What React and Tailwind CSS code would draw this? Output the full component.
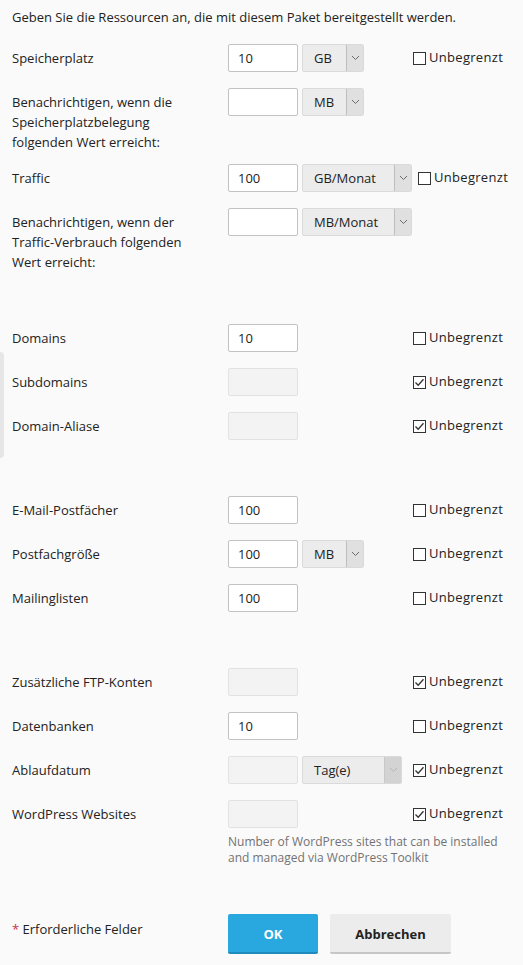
import React from "react";

function Chevron({ light }) {
  return (
    <svg width="9" height="6" viewBox="0 0 9 6" fill="none">
      <polyline
        points="1,1 4.5,4.5 8,1"
        stroke={light ? "#b5b5b5" : "#6b6b6b"}
        strokeWidth="1"
      />
    </svg>
  );
}

function TextInput({ value, disabled }) {
  return (
    <div
      className={
        disabled
          ? "h-[28px] w-[70px] shrink-0 rounded-[2px] border border-[#e2e2e2] bg-[#f3f3f3]"
          : "h-[28px] w-[70px] shrink-0 rounded-[2px] border border-[#c2c2c2] bg-white pl-[9px] text-[13px] leading-[26px] text-[#222]"
      }
    >
      {value}
    </div>
  );
}

function Select({ value, size, disabled }) {
  const w =
    size === "wide" ? "w-[110px]" : size === "mid" ? "w-[100px]" : "w-[62px]";
  return (
    <div
      className={
        "ml-[4px] flex h-[28px] shrink-0 rounded-[2px] border border-[#dadada] bg-[#ececec] " +
        w
      }
    >
      <span className="flex-1 pl-[11px] text-[13px] leading-[26px] text-[#222]">
        {value}
      </span>
      <span
        className={
          disabled
            ? "flex w-[17px] items-center justify-center border-l border-[#c8c8c8] bg-[#d3d3d3]"
            : "flex w-[17px] items-center justify-center border-l border-[#bdbdbd] bg-[#e0e0e0]"
        }
      >
        <Chevron light={disabled} />
      </span>
    </div>
  );
}

function Check({ checked }) {
  return (
    <div className="ml-[6px] flex h-[28px] items-center text-[13px] text-[#222]">
      <span className="flex h-[13px] w-[13px] items-center justify-center border border-[#333] bg-white">
        {checked && (
          <svg width="11" height="11" viewBox="0 0 11 11" fill="none">
            <polyline
              points="1.5,5.5 4.2,8.3 9.5,2.2"
              stroke="#333"
              strokeWidth="1.3"
            />
          </svg>
        )}
      </span>
      <span className="ml-[3px] tracking-[0.3px]">Unbegrenzt</span>
    </div>
  );
}

function Row({ label, multi, children, check }) {
  return (
    <div className={"flex items-start " + (multi ? "mb-[12px]" : "mb-[16px]")}>
      <div className="w-[216px] shrink-0 pt-[4px] pr-[24px] text-[13px] leading-[20px] text-[#222]">
        {label}
      </div>
      <div className="flex min-w-[179px]">{children}</div>
      {check !== undefined && <Check checked={check} />}
    </div>
  );
}

export default function App() {
  return (
    <div className="relative min-h-[965px] bg-[#fafafa] px-[12px] pt-[7px] font-['Open_Sans',sans-serif]">
      <div className="absolute left-0 top-[352px] h-[106px] w-[4px] rounded-r-[4px] bg-[#e6e6e6]" />

      <p className="mb-[17px] text-[13px] leading-[20px] text-[#222]">
        Geben Sie die Ressourcen an, die mit diesem Paket bereitgestellt werden.
      </p>

      <Row label="Speicherplatz" check={false}>
        <TextInput value="10" />
        <Select value="GB" />
      </Row>
      <Row
        multi
        label="Benachrichtigen, wenn die Speicherplatzbelegung folgenden Wert erreicht:"
      >
        <TextInput value="" />
        <Select value="MB" />
      </Row>
      <Row label="Traffic" check={false}>
        <TextInput value="100" />
        <Select value="GB/Monat" size="wide" />
      </Row>
      <Row
        multi
        label="Benachrichtigen, wenn der Traffic-Verbrauch folgenden Wert erreicht:"
      >
        <TextInput value="" />
        <Select value="MB/Monat" size="wide" />
      </Row>

      <div className="h-[40px]" />

      <Row label="Domains" check={false}>
        <TextInput value="10" />
      </Row>
      <Row label="Subdomains" check={true}>
        <TextInput disabled />
      </Row>
      <Row label="Domain-Aliase" check={true}>
        <TextInput disabled />
      </Row>

      <div className="h-[40px]" />

      <Row label="E-Mail-Postfächer" check={false}>
        <TextInput value="100" />
      </Row>
      <Row label="Postfachgröße" check={false}>
        <TextInput value="100" />
        <Select value="MB" />
      </Row>
      <Row label="Mailinglisten" check={false}>
        <TextInput value="100" />
      </Row>

      <div className="h-[40px]" />

      <Row label="Zusätzliche FTP-Konten" check={true}>
        <TextInput disabled />
      </Row>
      <Row label="Datenbanken" check={false}>
        <TextInput value="10" />
      </Row>
      <Row label="Ablaufdatum" check={true}>
        <TextInput disabled />
        <Select value="Tag(e)" size="mid" disabled />
      </Row>
      <div className="flex items-start">
        <div className="w-[216px] shrink-0 pt-[4px] pr-[24px] text-[13px] leading-[20px] text-[#222]">
          WordPress Websites
        </div>
        <div>
          <div className="flex">
            <div className="flex min-w-[179px]">
              <TextInput disabled />
            </div>
            <Check checked={true} />
          </div>
          <p className="mt-[6px] w-[282px] text-[12px] leading-[16px] text-[#737373]">
            Number of WordPress sites that can be installed and managed via
            WordPress Toolkit
          </p>
        </div>
      </div>

      <div className="mt-[48px] flex items-start">
        <div className="w-[216px] shrink-0 pt-[5px] text-[13px] leading-[20px] text-[#222]">
          <span className="text-[#d02d4c]">*</span> Erforderliche Felder
        </div>
        <button className="h-[40px] w-[90px] rounded-[2px] border-b-2 border-[#1f8bbd] bg-[#28a8de] pt-[3px] text-[13px] font-bold text-white">
          OK
        </button>
        <button className="ml-[12px] h-[40px] w-[121px] rounded-[2px] border-b-2 border-[#c6c6c6] bg-[#ececec] pt-[3px] text-[13px] font-bold text-[#222]">
          Abbrechen
        </button>
      </div>
    </div>
  );
}
